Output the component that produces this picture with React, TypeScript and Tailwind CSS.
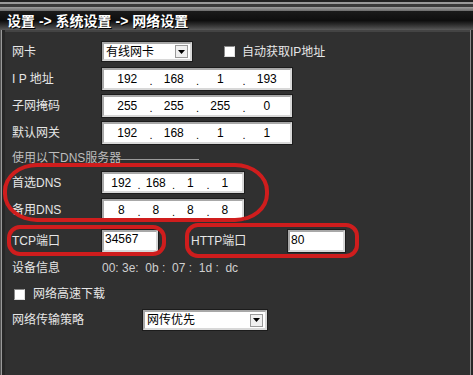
import React from 'react';

const Field: React.FC<{ className?: string; children?: React.ReactNode }> = ({ className = '', children }) => (
  <div
    className={`bg-white border-2 border-[#a8a8a8] border-r-[#d8d8d8] border-b-[#d8d8d8] shadow-[0_0_0_1px_#1c1c1c] text-black ${className}`}
  >
    {children}
  </div>
);

const IpField: React.FC<{ parts: string[]; className: string; cell: string }> = ({ parts, className, cell }) => (
  <Field className={`flex items-center ${className}`}>
    {parts.map((p, i) => (
      <div key={i} className={`relative flex justify-center text-[12px] leading-none ${cell}`}>
        {p}
        {i < parts.length - 1 && (
          <span className="absolute -right-[2px] top-[3px] text-[11px]">.</span>
        )}
      </div>
    ))}
  </Field>
);

const Select: React.FC<{ value: string; className: string }> = ({ value, className }) => (
  <Field className={`flex items-center pl-[2px] pr-[2px] ${className}`}>
    <span className="flex-1 text-[12px] leading-none">{value}</span>
    <div className="w-[13px] h-[13px] bg-[#f0f0f0] border border-[#9a9a9a] flex items-center justify-center">
      <svg width="7" height="4" viewBox="0 0 7 4">
        <path d="M0 0h7L3.5 4z" fill="#000" />
      </svg>
    </div>
  </Field>
);

const Check: React.FC = () => (
  <div className="w-[11px] h-[11px] bg-white border border-[#8a8a8a] border-r-[#e0e0e0] border-b-[#e0e0e0]" />
);

const Label: React.FC<{ children: React.ReactNode; className?: string }> = ({ children, className = 'w-[90px]' }) => (
  <div className={`text-[12px] leading-none text-[#e6e6e6] ${className}`}>{children}</div>
);

export default function App() {
  return (
    <div className="w-[473px] h-[375px] overflow-hidden bg-[#303030] font-['Liberation_Sans','Noto_Sans_CJK_SC',sans-serif] flex flex-col">
      {/* top chrome */}
      <div className="h-[2px] bg-[#222]" />
      <div className="h-[2px] bg-[#9a9a9a]" />
      <div className="h-[3px] bg-[#3a3a3a]" />
      <div className="h-[4px] bg-gradient-to-b from-[#a0a0a0] to-[#6a6a6a]" />
      <div className="h-[19px] bg-gradient-to-b from-[#1a1a1a] via-[#0e0e0e] to-[#5a5a5a] flex items-center pl-[7px] relative">
        <span className="text-[14px] font-bold text-white leading-none [text-shadow:1px_1px_0_#000]">
          设置 -&gt; 系统设置 -&gt; 网络设置
        </span>
      </div>

      <div className="flex flex-1">
        {/* left frame */}
        <div className="w-[1px] bg-[#555]" />
        <div className="w-[1px] bg-[#9a9a9a]" />
        <div className="w-[3px] bg-[#262626]" />

        <div className="relative flex-1 flex flex-col pl-[7px]">
          <div className="h-[2px] -ml-[7px] bg-[#444]" />

          {/* 网卡 */}
          <div className="flex items-center mt-[10px] h-[19px]">
            <Label>网卡</Label>
            <Select value="有线网卡" className="w-[90px] h-[19px]" />
            <div className="ml-[32px] flex items-center gap-[7px]">
              <Check />
              <Label className="">自动获取IP地址</Label>
            </div>
          </div>

          <div className="flex items-center mt-[7px] h-[22px]">
            <Label>I P 地址</Label>
            <IpField parts={['192', '168', '1', '193']} className="w-[190px] h-[22px]" cell="w-[46.5px]" />
          </div>
          <div className="flex items-center mt-[5px] h-[22px]">
            <Label>子网掩码</Label>
            <IpField parts={['255', '255', '255', '0']} className="w-[190px] h-[22px]" cell="w-[46.5px]" />
          </div>
          <div className="flex items-center mt-[5px] h-[22px]">
            <Label>默认网关</Label>
            <IpField parts={['192', '168', '1', '1']} className="w-[190px] h-[22px]" cell="w-[46.5px]" />
          </div>

          <div className="flex items-center mt-[7px] h-[14px]">
            <span className="text-[12px] leading-none text-[#bdbdbd]">使用以下DNS服务器</span>
            <div className="w-[78px] h-[1px] bg-[#9a9a9a] mt-[2px]" />
          </div>

          <div className="flex items-center mt-[7px] h-[21px]">
            <Label>首选DNS</Label>
            <IpField parts={['192', '168', '1', '1']} className="w-[142px] h-[21px]" cell="w-[34.5px]" />
          </div>
          <div className="flex items-center mt-[6px] h-[21px]">
            <Label>备用DNS</Label>
            <IpField parts={['8', '8', '8', '8']} className="w-[142px] h-[21px]" cell="w-[34.5px]" />
          </div>

          <div className="flex items-center mt-[10px] h-[22px]">
            <Label>TCP端口</Label>
            <Field className="w-[56px] h-[22px] px-[1px] text-[12px] leading-none pt-[1px]">34567</Field>
            <Label className="ml-[33px] w-[97px]">HTTP端口</Label>
            <Field className="w-[57px] h-[22px] px-[1px] text-[12px] leading-none pt-[2px]">80</Field>
          </div>

          <div className="flex items-center mt-[9px] h-[14px]">
            <Label>设备信息</Label>
            <span className="text-[12px] leading-none text-[#cfcfcf] whitespace-pre">00: 3e:  0b :  07 :  1d :  dc</span>
          </div>

          <div className="flex items-center mt-[12px] h-[14px] pl-[2px] gap-[8px]">
            <Check />
            <Label className="">网络高速下载</Label>
          </div>

          <div className="flex items-center mt-[9px] h-[20px]">
            <Label className="w-[131px]">网络传输策略</Label>
            <Select value="网传优先" className="w-[124px] h-[20px]" />
          </div>

          {/* red annotations */}
          <div className="absolute left-[-2px] top-[133px] w-[266px] h-[59px] border-[4px] border-[#cf1d1d] rounded-[34px/28px]" />
          <div className="absolute left-[2px] top-[195px] w-[159px] h-[31px] border-[4px] border-[#cf1d1d] rounded-[13px]" />
          <div className="absolute left-[180px] top-[193px] w-[174px] h-[35px] border-[4px] border-[#cf1d1d] rounded-[13px]" />
        </div>

        {/* right frame */}
        <div className="w-[1px] bg-[#8a8a8a]" />
        <div className="w-[2px] bg-[#262626]" />
      </div>
    </div>
  );
}
